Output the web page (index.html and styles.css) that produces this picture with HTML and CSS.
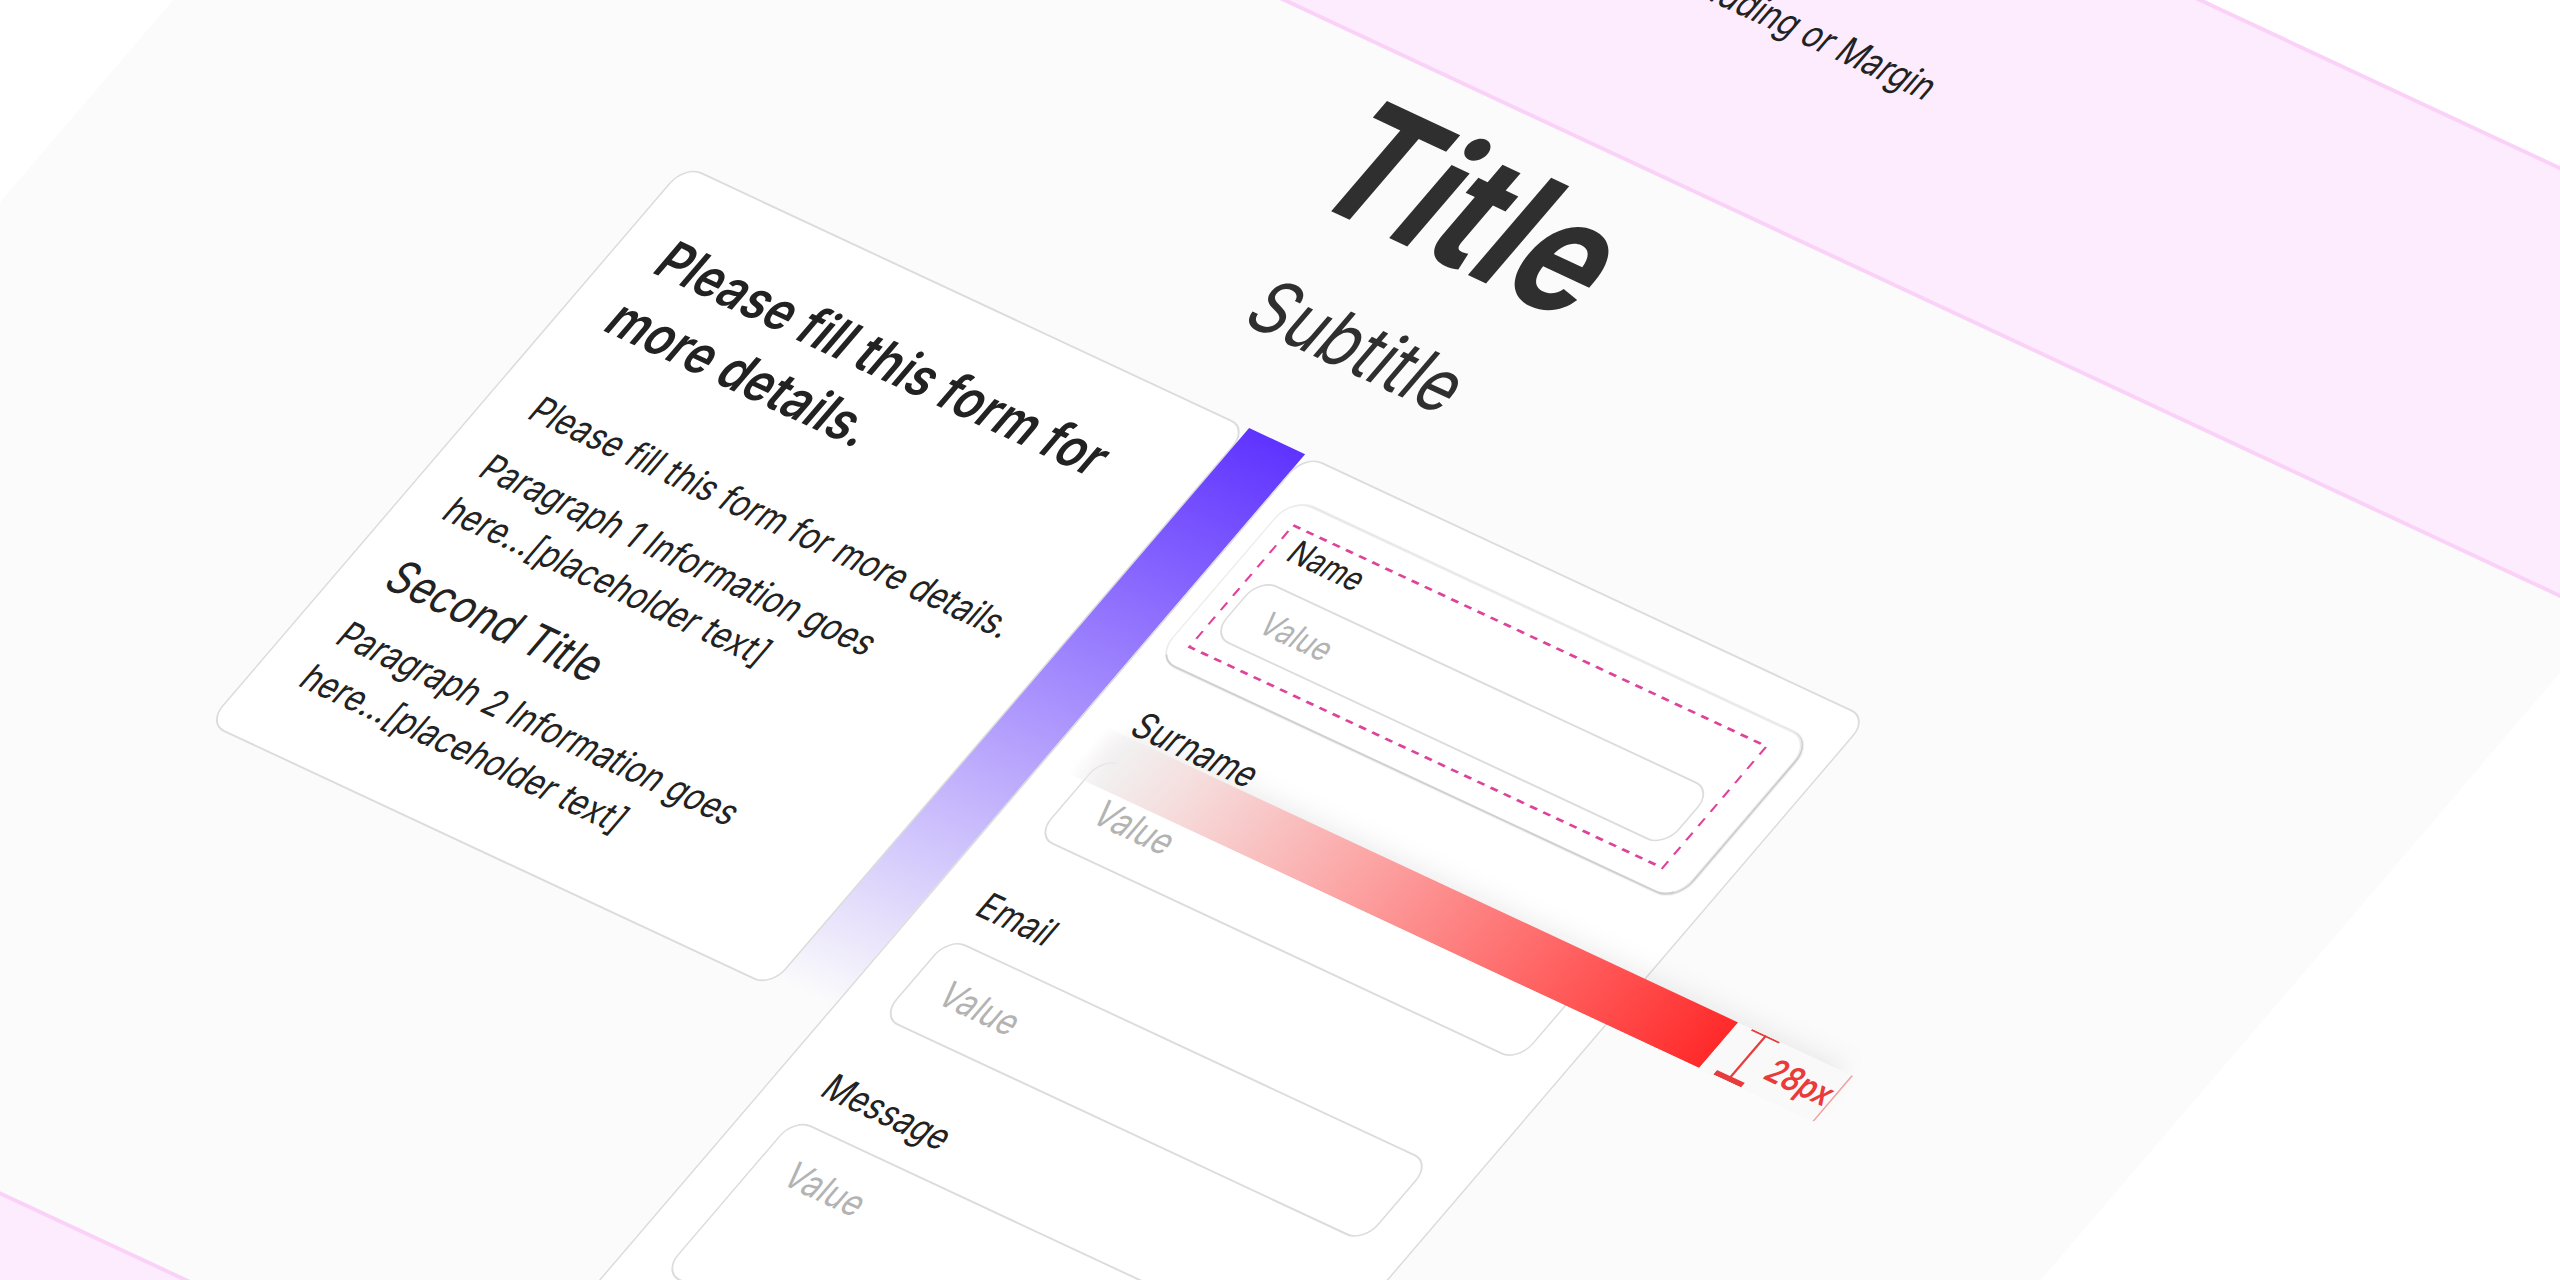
FILE: index.html
```
<!DOCTYPE html>
<html lang="en">
<head>
    <meta charset="UTF-8">
    <meta name="viewport" content="width=device-width, initial-scale=1.0">
    <title>Form Section Spacing</title>
    <link rel="stylesheet" href="styles.css">
</head>
<body>
    <main class="artboard">
        <div class="spacing-band spacing-band-top">
            <p>Padding or Margin</p>
        </div>

        <section class="section">
            <header class="section-header">
                <h1>Title</h1>
                <p class="subtitle">Subtitle</p>
            </header>

            <div class="columns">
                <article class="card info-card">
                    <h2>Please fill this form for more details.</h2>
                    <p>Please fill this form for more details.</p>
                    <p>Paragraph 1 Information goes<br>here...[placeholder text]</p>
                    <h3>Second Title</h3>
                    <p>Paragraph 2 Information goes<br>here...[placeholder text]</p>
                </article>

                <div class="column-gap"></div>

                <form class="card form-card">
                    <div class="field-highlight">
                        <div class="field field-compact">
                            <!-- Padding outline -->
                            <svg class="field-outline" aria-hidden="true">
                                <rect width="100%" height="100%" />
                            </svg>
                            <label for="name">Name</label>
                            <input type="text" id="name" placeholder="Value">
                        </div>
                    </div>

                    <div class="field">
                        <label for="surname">Surname</label>
                        <input type="text" id="surname" placeholder="Value">

                        <!-- Gap measurement -->
                        <div class="measure">
                            <div class="measure-bar"></div>
                            <div class="measure-label">
                                <svg class="measure-icon" viewBox="0 0 20 30" aria-hidden="true">
                                    <path d="M0 .5H20" stroke-width="1" />
                                    <path d="M10 0V28" stroke-width="1.5" />
                                    <path d="M0 28.5H20" stroke-width="3" />
                                </svg>
                                <span>28px</span>
                            </div>
                        </div>
                    </div>

                    <div class="field">
                        <label for="email">Email</label>
                        <input type="email" id="email" placeholder="Value">
                    </div>

                    <div class="field">
                        <label for="message">Message</label>
                        <textarea id="message" placeholder="Value"></textarea>
                    </div>
                </form>
            </div>
        </section>

        <div class="spacing-band"></div>
    </main>
</body>
</html>
```
FILE: styles.css
```
* {
    box-sizing: border-box;
}

html {
    height: 100%;
    overflow: hidden;
}

body {
    margin: 0;
    height: 100%;
    overflow: hidden;
    background-color: #fff;
    color: #222;
    font-family: Inter, "Liberation Sans", sans-serif;
    font-size: 20px;
    line-height: 28px;
}

h1,
h2,
h3,
p {
    margin: 0;
}

/* The whole artboard lies on one tilted plane */
.artboard {
    width: 1512px;
    background-color: #fbfbfb;
    transform-origin: 0 0;
    transform: translate(753px, -678px) matrix(1.4, 0.654, -1.3, 1.52, 0, 0);
}

.spacing-band {
    height: 203px;
    display: flex;
    align-items: center;
    background-color: #fdecfe;
    border-top: 2px solid #fad2f8;
    border-bottom: 2px solid #fad2f8;
}

.spacing-band-top {
    justify-content: flex-end;
    padding-right: 38%;
}

.section {
    padding: 12px 0 66px;
}

.section-header {
    text-align: center;
    color: #2f2f2f;
    margin-bottom: 40px;
}

h1 {
    font-size: 88px;
    font-weight: 700;
    line-height: 88px;
    margin-bottom: 24px;
}

.subtitle {
    font-size: 40px;
    line-height: 44px;
}

.columns {
    display: grid;
    grid-template-columns: 403px 40px 403px;
    justify-content: center;
    align-items: start;
}

.card {
    background-color: #fff;
    border: 1px solid #dcdcdc;
    border-radius: 12px;
}

.info-card {
    padding: 28px 28px 30px;
}

.info-card h2 {
    font-size: 29px;
    font-weight: 600;
    line-height: 38px;
    margin-bottom: 28px;
}

.info-card p + p {
    margin-top: 10px;
}

.info-card h3 {
    font-size: 25px;
    font-weight: 400;
    line-height: 34px;
    margin-top: 12px;
}

.info-card h3 + p {
    margin-top: 8px;
}

.column-gap {
    align-self: stretch;
    background: linear-gradient(#5f33ff, rgba(95, 51, 255, 0) 64%);
}

.form-card {
    display: flex;
    flex-direction: column;
    gap: 30px;
    padding: 32px 28px 40px;
}

.field {
    position: relative;
    display: flex;
    flex-direction: column;
    gap: 10px;
}

/* Labels stay readable over the measuring strip */
label {
    position: relative;
    z-index: 1;
    padding-left: 2px;
    font-size: 20px;
    line-height: 26px;
}

input,
textarea {
    display: block;
    width: 100%;
    height: 53px;
    padding: 0 20px;
    border: 1px solid #dcdcdc;
    border-radius: 12px;
    background-color: #fff;
    color: #222;
    font: inherit;
    outline: none;
    resize: none;
}

textarea {
    height: 102px;
    padding: 12px 20px;
}

input::placeholder,
textarea::placeholder {
    color: #b3b3b3;
    opacity: 1;
}

/* Name field, lifted off the form */
.field-highlight {
    margin: -10px -10px -9px -17px;
    padding: 12px 20px 12px 12px;
    border: 1px solid #ececec;
    border-bottom-color: #d0d0d0;
    border-radius: 14px;
    background-color: #fff;
    box-shadow: 1px 0 1px rgba(0, 0, 0, 0.24);
}

.field-compact {
    gap: 8px;
    padding: 0 8px 10px 6px;
}

.field-compact label {
    padding-left: 4px;
    font-size: 18px;
    line-height: 24px;
}

.field-compact input {
    height: 38px;
    font-size: 18px;
}

.field-outline {
    position: absolute;
    inset: 0;
    width: 100%;
    height: 100%;
    overflow: visible;
    pointer-events: none;
}

.field-outline rect {
    fill: none;
    stroke: #dd4499;
    stroke-width: 1.4;
    stroke-dasharray: 5 4.4;
}

.measure {
    position: absolute;
    top: 22px;
    left: -12px;
    display: flex;
    height: 30px;
    clip-path: inset(-40px -40px 0 -40px);
}

/* Soft shadow above the strip */
.measure::before {
    content: "";
    position: absolute;
    inset: -2px 8px 4px 16px;
    background-color: rgba(0, 0, 0, 0.08);
    filter: blur(7px);
}

.measure-bar {
    position: relative;
    width: 452px;
    background: linear-gradient(90deg, rgba(240, 238, 238, 0), #f2efef 24px, #f6dcdc 16%, #fca6a6 42%, #ff6666 72%, #ff2a2a);
}

.measure-label {
    position: relative;
    display: flex;
    align-items: center;
    gap: 6px;
    width: 82px;
    padding-left: 10px;
    border-right: 1px solid #f0a0a0;
    background-color: #f9f9f9;
    color: #ea3a3a;
    font-size: 18px;
    font-weight: 600;
    line-height: 30px;
}

.measure-icon {
    flex: none;
    width: 20px;
    height: 30px;
    fill: none;
    stroke: #e63c3c;
}
```
